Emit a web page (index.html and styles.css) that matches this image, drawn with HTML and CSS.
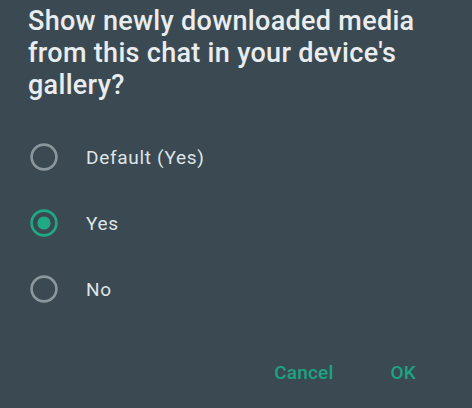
FILE: index.html
```html
<!DOCTYPE html>
<html>
<head>
<meta charset="utf-8">
<link rel="stylesheet" href="styles.css">
</head>
<body>
<div class="dialog">
  <h1 class="title">Show newly downloaded media from this chat in your device's gallery?</h1>
  <div class="options">
    <div class="option">
      <svg class="radio" width="28" height="28" viewBox="0 0 28 28"><circle cx="14" cy="14" r="12.4" fill="none" stroke="#8b979c" stroke-width="2.6"/></svg>
      <span class="label">Default (Yes)</span>
    </div>
    <div class="option">
      <svg class="radio" width="28" height="28" viewBox="0 0 28 28"><circle cx="14" cy="14" r="12.4" fill="none" stroke="#1fa985" stroke-width="2.6"/><circle cx="14" cy="14" r="6.6" fill="#1fa985"/></svg>
      <span class="label">Yes</span>
    </div>
    <div class="option">
      <svg class="radio" width="28" height="28" viewBox="0 0 28 28"><circle cx="14" cy="14" r="12.4" fill="none" stroke="#8b979c" stroke-width="2.6"/></svg>
      <span class="label">No</span>
    </div>
  </div>
  <div class="actions">
    <span class="btn">Cancel</span>
    <span class="btn">OK</span>
  </div>
</div>
</body>
</html>
```
FILE: styles.css
```css
html, body {
  margin: 0;
  padding: 0;
  background: #3b4a52;
  height: 100%;
}
.dialog {
  font-family: Roboto, "Noto Sans", sans-serif;
  padding-top: 5px;
}
.title {
  margin: 0;
  padding: 0 24px 0 28px;
  font-size: 27px;
  line-height: 32px;
  font-weight: 500;
  letter-spacing: 0.3px;
  color: #e9edef;
}
.options {
  margin-top: 23px;
}
.option {
  display: flex;
  align-items: center;
  height: 66px;
  padding-left: 30px;
}
.radio {
  flex: none;
}
.label {
  margin-left: 28px;
  font-size: 19px;
  letter-spacing: 0.7px;
  color: #dfe4e6;
}
.actions {
  display: flex;
  justify-content: flex-end;
  gap: 57px;
  padding-right: 56px;
  margin-top: 39px;
}
.btn {
  font-size: 19px;
  line-height: 24px;
  font-weight: 500;
  color: #1ca382;
  letter-spacing: 0.2px;
}
```
